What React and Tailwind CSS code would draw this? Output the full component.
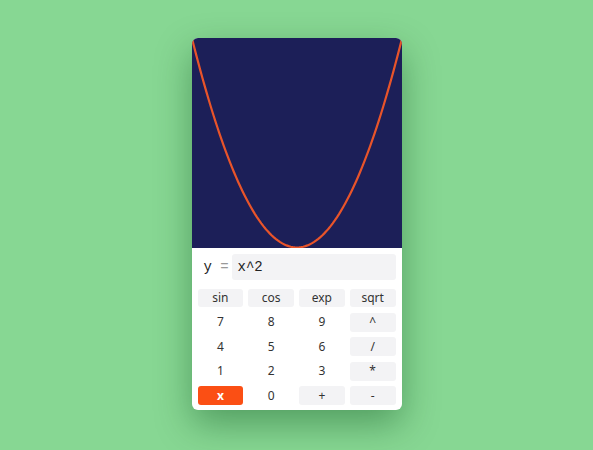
import React from "react";

function Graph() {
  const pts = [];
  const W = 210, H = 210;
  for (let i = 0; i <= 100; i++) {
    const x = -1 + (2 * i) / 100;
    const px = ((x + 1) / 2) * W;
    const py = H - x * x * (H - 1) - 0.5;
    pts.push(`${px.toFixed(2)},${py.toFixed(2)}`);
  }
  return (
    <svg width="210" height="210" viewBox="0 0 210 210" className="block">
      <rect width="210" height="210" fill="#1c1f58" />
      <polyline points={pts.join(" ")} fill="none" stroke="#e8542a" strokeWidth="2.2" />
    </svg>
  );
}

function Btn({ children, kind, first }) {
  const h = first ? "h-[18px]" : "h-[19px]";
  const base = `${h} flex items-center justify-center text-[12px] rounded-[3px]`;
  if (kind === "op") return <div className={`${base} bg-[#f3f3f5] text-[#333]`}>{children}</div>;
  if (kind === "x") return <div className={`${base} bg-[#fb4f14] text-white font-bold`}>{children}</div>;
  return <div className={`${base} text-[#333]`}>{children}</div>;
}

export default function App() {
  const rows = [
    [["7"], ["8"], ["9"], ["^", "op"]],
    [["4"], ["5"], ["6"], ["/", "op"]],
    [["1"], ["2"], ["3"], ["*", "op"]],
    [["x", "x"], ["0"], ["+", "op"], ["-", "op"]],
  ];
  const mono = { fontFamily: '"Liberation Mono", monospace' };
  return (
    <div className="w-[593px] h-[450px] bg-[#87d793] flex items-start justify-center pt-[38px]" style={{ fontFamily: '"Noto Sans", sans-serif' }}>
      <div className="w-[210px] h-[372px] bg-white rounded-[6px] overflow-hidden shadow-[0_14px_36px_rgba(0,70,20,0.4)] flex flex-col">
        <Graph />
        <div className="flex items-center px-[6px] pt-[6px]">
          <div className="w-[34px] pl-[6px] text-[14px] text-[#222] whitespace-nowrap" style={mono}>
            y <span className="text-[#999]">=</span>
          </div>
          <div className="flex-1 h-[26px] bg-[#f3f3f5] rounded-[3px] flex items-center px-[6px] text-[14px] text-[#222]" style={mono}>
            x^2
          </div>
        </div>
        <div className="grid grid-cols-4 gap-x-[5px] gap-y-[5.6px] px-[6px] pt-[9px]">
          <Btn kind="op" first>sin</Btn>
          <Btn kind="op" first>cos</Btn>
          <Btn kind="op" first>exp</Btn>
          <Btn kind="op" first>sqrt</Btn>
          {rows.flat().map(([t, k], i) => (
            <Btn key={i} kind={k}>{t}</Btn>
          ))}
        </div>
      </div>
    </div>
  );
}
